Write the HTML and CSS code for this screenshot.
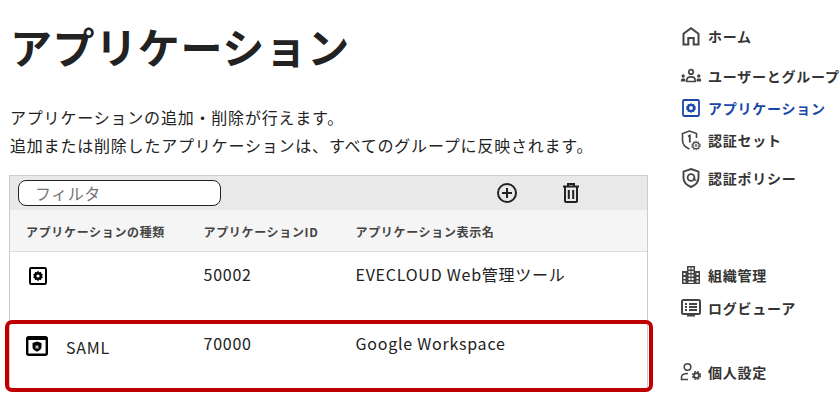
FILE: index.html
```html
<!DOCTYPE html>
<html lang="ja">
<head>
<meta charset="utf-8">
<title>アプリケーション</title>
<link rel="stylesheet" href="styles.css">
</head>
<body>
<div class="page">
  <main class="main">
    <h1 class="title">アプリケーション</h1>
    <p class="desc">アプリケーションの追加・削除が行えます。<br>追加または削除したアプリケーションは、すべてのグループに反映されます。</p>
    <section class="table">
      <div class="toolbar">
        <div class="filter">フィルタ</div>
        <svg class="tool-add" width="22" height="22" viewBox="0 0 22 22" fill="none" stroke="#222" stroke-width="2"><circle cx="11" cy="11" r="9"/><path d="M11 6v10M6 11h10"/></svg>
        <svg class="tool-del" width="16" height="20" viewBox="0 0 16 20" fill="none" stroke="#222" stroke-width="2"><path d="M2 4v14a1 1 0 0 0 1 1h10a1 1 0 0 0 1-1V4M0 3.500h16M5 3V1h6v2M5.800 7v9M10.200 7v9"/></svg>
      </div>
      <div class="row head">
        <div>アプリケーションの種類</div>
        <div>アプリケーションID</div>
        <div>アプリケーション表示名</div>
      </div>
      <div class="row body first">
        <div class="type">
          <svg class="gear-icon" width="18" height="18" viewBox="0 0 18 18"><rect x="1" y="1" width="16" height="16" rx="1.200" fill="none" stroke="#000" stroke-width="2"/><path d="M9 3.800l1.200 1.400 1.700-.3.500 1.700 1.400 1-.7 1.400.7 1.400-1.400 1-.5 1.700-1.700-.3L9 14.200l-1.200-1.400-1.700.3-.5-1.700-1.400-1 .7-1.400-.7-1.400 1.400-1 .5-1.700 1.700.3z" fill="#000"/><circle cx="9" cy="9" r="1.600" fill="#fff"/></svg>
        </div>
        <div>50002</div>
        <div>EVECLOUD Web管理ツール</div>
      </div>
      <div class="row body second">
        <div class="type">
          <svg width="22" height="20" viewBox="0 0 22 20"><rect x="1.200" y="1.200" width="19.600" height="17.600" rx="1.500" fill="none" stroke="#000" stroke-width="2.400"/><path d="M1 2h20v2H1z" fill="#000"/><path d="M11 5.500l4.500 1.500v3.800c0 2.400-1.900 4-4.500 4.900-2.600-.9-4.500-2.500-4.500-4.900V7z" fill="#000"/><rect x="9.500" y="9.500" width="3" height="3" fill="#bbb"/></svg>
          <span class="saml">SAML</span>
        </div>
        <div>70000</div>
        <div>Google Workspace</div>
      </div>
      <div class="highlight"></div>
    </section>
  </main>
  <nav class="nav">
    <a class="item home"><span class="icon"><svg width="18" height="19" viewBox="0 0 18 19" fill="none" stroke="#444" stroke-width="2"><path d="M1.500 17.500V6.800L9 1.200l7.500 5.600v10.700h-4.800v-6.500H6.300v6.500z"/></svg></span>ホーム</a>
    <a class="item users"><span class="icon"><svg width="24" height="16" viewBox="0 0 24 16" fill="#444"><circle cx="12" cy="3.500" r="2.500" fill="none" stroke="#444" stroke-width="1.800"/><path d="M7.500 14v-1.500C7.500 10 9.500 9 12 9s4.500 1 4.500 3.500V14z" fill="none" stroke="#444" stroke-width="1.800"/><circle cx="3.500" cy="8" r="1.800"/><path d="M1 14v-1.500C1 11.200 2 10.800 3.500 10.800S6 11.200 6 12.500V14z"/><circle cx="20.500" cy="8" r="1.800"/><path d="M18 14v-1.500c0-1.300 1-1.700 2.500-1.700s2.500.4 2.500 1.700V14z"/></svg></span>ユーザーとグループ</a>
    <a class="item active"><span class="icon"><svg width="18" height="18" viewBox="0 0 18 18"><rect x="1" y="1" width="16" height="16" rx="1.200" fill="none" stroke="#1a47a8" stroke-width="1.800"/><path d="M9 4l1.300 1.300 1.800-.3.500 1.800 1.400.9-.7 1.300.7 1.300-1.400.9-.5 1.800-1.800-.3L9 14l-1.300-1.300-1.800.3-.5-1.800-1.400-.9.7-1.300-.7-1.300 1.400-.9.500-1.800 1.800.3z" fill="#1a47a8"/><circle cx="9" cy="9" r="1.900" fill="#fff"/></svg></span>アプリケーション</a>
    <a class="item authset"><span class="icon"><svg width="20" height="21" viewBox="0 0 20 21" fill="none" stroke="#444" stroke-width="1.600"><path d="M15.500 8V3.500L8.500 1l-7 2.500V10c0 4 3 7.500 7 9"/><path d="M7 6.500L8.800 5.500v7" stroke-width="1.800"/><circle cx="15" cy="15.500" r="3.200" stroke-width="1.300"/><circle cx="15" cy="15.500" r="4.300" stroke-width="1" stroke-dasharray="1.500 1.200"/><circle cx="15" cy="15.500" r="1" stroke-width=".9"/></svg></span>認証セット</a>
    <a class="item policy"><span class="icon"><svg width="18" height="20" viewBox="0 0 18 20" fill="none" stroke="#444" stroke-width="1.900"><path d="M9 1l7.500 2.600v6.200c0 4.300-3 7.300-7.500 9.200-4.500-1.900-7.500-4.900-7.500-9.200V3.600z"/><circle cx="9" cy="9.500" r="3.400" stroke-width="1.800"/><path d="M12.400 9.500v1.600c0 1 1.300 1.300 1.700.4" stroke-width="1.600"/></svg></span>認証ポリシー</a>
    <a class="item org"><span class="icon"><svg width="20" height="20" viewBox="0 0 20 20" fill="#444"><path fill-rule="evenodd" d="M6 1h8v5h5v13H1V6h5zM7.500 2.500v2h2v-2zm3 0v2h2v-2zM7.500 6v2h2V6zm3 0v2h2V6zM2.500 8v2h2V8zm5 1.500v2h2v-2zm3 0v2h2v-2zm5-1.500v2h2V8zM2.500 12v2h2v-2zm5 1v2h2v-2zm3 0v2h2v-2zm5-1v2h2v-2zM2.500 15.500v2h2v-2zm5 1v1.500h5v-1.500zm8-1v2h2v-2z"/></svg></span>組織管理</a>
    <a class="item log"><span class="icon"><svg width="20" height="18" viewBox="0 0 20 18" fill="none" stroke="#444" stroke-width="2"><rect x="1" y="1" width="18" height="14" rx="1.500"/><path d="M8 5h8M8 8h8M8 11h8M4 5h2M4 8h2M4 11h2M6 16.500h8"/></svg></span>ログビューア</a>
    <a class="item personal"><span class="icon"><svg width="22" height="20" viewBox="0 0 22 20" fill="none" stroke="#444" stroke-width="1.600"><circle cx="7.500" cy="5" r="3.300"/><path d="M8 11.500c-3.500 0-6.500 1-6.500 3.500v2.500H8"/><circle cx="16.500" cy="13.500" r="2.400" stroke-width="1.600"/><circle cx="16.500" cy="13.500" r="3.800" stroke-width="1.600" stroke-dasharray="2 1"/></svg></span>個人設定</a>
  </nav>
</div>
</body>
</html>
```
FILE: styles.css
```css
* { box-sizing: border-box; }
html, body { margin: 0; padding: 0; }
body {
  width: 840px;
  height: 400px;
  overflow: hidden;
  background: #fff;
  color: #222;
  font-family: "Noto Sans CJK JP", "Noto Sans", sans-serif;
}
.page { display: flex; height: 400px; }
.main { width: 680px; padding: 0 0 0 10px; flex: none; }
.title {
  margin: 0;
  padding-top: 16px;
  font-size: 42px;
  line-height: 60px;
  font-weight: 700;
  letter-spacing: 0.6px;
  color: #222;
}
.desc {
  margin: 27px 0 0;
  font-size: 16px;
  line-height: 28px;
  letter-spacing: 0.8px;
  color: #222;
}
.table {
  position: relative;
  width: 639px;
  height: 215px;
  margin: 16px 0 0 -1px;
  border: 1px solid #ccc;
  border-bottom: 0;
}
.toolbar {
  display: flex;
  align-items: center;
  height: 34px;
  background: #e9e9e9;
  padding-left: 8px;
}
.filter {
  width: 203px;
  height: 26px;
  border: 1px solid #222;
  border-radius: 8px;
  background: #fff;
  padding-left: 16px;
  font-size: 16px;
  line-height: 24px;
  letter-spacing: 0.5px;
  color: #757575;
}
.tool-add { margin-left: 275px; }
.tool-del { margin-left: 45px; }
.row {
  display: grid;
  grid-template-columns: 177.500px 152px 1fr;
  padding-left: 16px;
}
.head {
  height: 42px;
  padding-top: 1px;
  background: #f5f5f5;
  border-bottom: 1px solid #ddd;
  align-items: center;
  font-size: 12px;
  font-weight: 700;
  letter-spacing: 0.66px;
  color: #444;
}
.body {
  font-size: 16px;
  line-height: 24px;
  letter-spacing: 0.75px;
  color: #222;
}
.first { height: 68px; padding-top: 10px; }
.second { height: 70px; padding-top: 11px; }
.type { display: flex; align-items: center; height: 28px; }
.second .type { height: 29px; }
.gear-icon { margin-left: 3px; }
.saml { margin: 3px 0 0 18px; }
.highlight {
  position: absolute;
  left: -5px;
  top: 144px;
  width: 648px;
  height: 72px;
  border: 4px solid #c00000;
  border-radius: 7px;
}
.nav {
  flex: 1;
  display: flex;
  flex-direction: column;
  align-items: flex-start;
  padding-top: 24px;
}
.item {
  display: flex;
  align-items: center;
  gap: 6px;
  white-space: nowrap;
  font-size: 14px;
  font-weight: 700;
  letter-spacing: 0.75px;
  color: #333;
  height: 24px;
  flex: none;
}
.icon {
  display: flex;
  justify-content: center;
  align-items: center;
  width: 22px;
  height: 24px;
  flex: none;
}
.users { margin-top: 16px; }
.active { margin-top: 8px; color: #1a47a8; }
.authset { margin-top: 8px; }
.policy { margin-top: 14px; }
.org { margin-top: 73px; }
.log { margin-top: 9px; }
.personal { margin-top: 40px; }
```
